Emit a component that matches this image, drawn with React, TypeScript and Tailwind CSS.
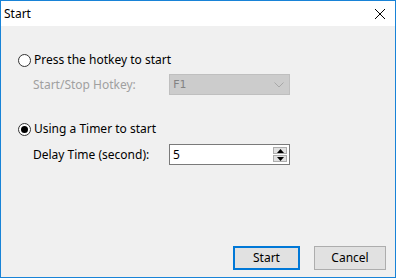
import React from "react";

function Radio({ checked }: { checked?: boolean }) {
  return (
    <div className="w-[13px] h-[13px] rounded-full border border-[#333333] bg-white flex items-center justify-center shrink-0">
      {checked && <div className="w-[7px] h-[7px] rounded-full bg-[#000000]" />}
    </div>
  );
}

export default function App() {
  const font = { fontFamily: '"Noto Sans", "Open Sans", sans-serif' };
  return (
    <div
      className="w-[396px] h-[278px] border border-[#1883d7] flex flex-col text-[12px] leading-none text-black overflow-hidden"
      style={font}
    >
      <div className="h-[25px] bg-white flex items-center justify-between pl-[3px] pr-[8px] shrink-0">
        <span className="text-[12px]">Start</span>
        <svg width="12" height="12" viewBox="0 0 12 12" className="mr-[1px]">
          <path d="M1 1 L11 11 M11 1 L1 11" stroke="#000" strokeWidth="1" fill="none" />
        </svg>
      </div>
      <div className="flex-1 bg-[#f0f0f0] flex flex-col pl-[17px]">
        <div className="mt-[26px] h-[16px] flex items-center gap-[3px]">
          <Radio />
          <span>Press the hotkey to start</span>
        </div>
        <div className="mt-[6px] h-[21px] flex items-center">
          <span className="w-[151px] pl-[15px] text-[#a0a0a0]">Start/Stop Hotkey:</span>
          <div className="w-[121px] h-[21px] bg-[#cccccc] border border-[#bfbfbf] flex items-center justify-between pl-[3px] pr-[5px] text-[#838383]">
            <span className="font-['DejaVu_Sans_Mono',monospace] text-[11px]">F1</span>
            <svg width="10" height="6" viewBox="0 0 10 6">
              <path d="M0.5 0.5 L5 5 L9.5 0.5" stroke="#a8a8a8" strokeWidth="1" fill="none" />
            </svg>
          </div>
        </div>
        <div className="mt-[26px] h-[16px] flex items-center gap-[3px]">
          <Radio checked />
          <span>Using a Timer to start</span>
        </div>
        <div className="mt-[7px] h-[21px] flex items-center">
          <span className="w-[151px] pl-[15px]">Delay Time (second):</span>
          <div className="w-[121px] h-[21px] bg-white border border-[#7a7a7a] flex items-center justify-between pl-[3px] pr-[2px]">
            <span>5</span>
            <div className="flex flex-col gap-[1px]">
              <div className="w-[14px] h-[7px] bg-[#e1e1e1] border border-[#adadad] flex items-center justify-center">
                <svg width="7" height="4" viewBox="0 0 7 4">
                  <path d="M0 4 L3.5 0 L7 4 Z" fill="#000" />
                </svg>
              </div>
              <div className="w-[14px] h-[7px] bg-[#e1e1e1] border border-[#adadad] flex items-center justify-center">
                <svg width="7" height="4" viewBox="0 0 7 4">
                  <path d="M0 0 L3.5 4 L7 0 Z" fill="#000" />
                </svg>
              </div>
            </div>
          </div>
        </div>
        <div className="mt-auto mb-[7px] flex justify-end gap-[14px] pr-[9px]">
          <div className="w-[67px] h-[24px] bg-[#e1e1e1] border-2 border-[#0078d7] flex items-center justify-center">
            Start
          </div>
          <div className="w-[72px] h-[24px] bg-[#e1e1e1] border border-[#adadad] flex items-center justify-center">
            Cancel
          </div>
        </div>
      </div>
    </div>
  );
}
